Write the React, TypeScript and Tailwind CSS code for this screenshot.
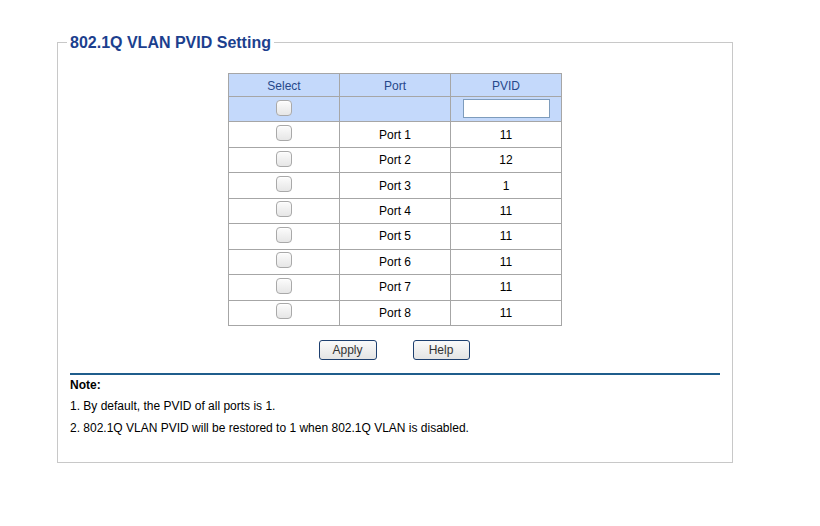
import React from "react";

const rows = [
  ["Port 1", "11"],
  ["Port 2", "12"],
  ["Port 3", "1"],
  ["Port 4", "11"],
  ["Port 5", "11"],
  ["Port 6", "11"],
  ["Port 7", "11"],
  ["Port 8", "11"],
];

function Check() {
  return (
    <span className="inline-block align-middle w-[16px] h-[16px] rounded-[4px] border border-[#a9a9a9] bg-gradient-to-b from-[#fcfcfc] to-[#e6e6e6] shadow-[inset_0_1px_1px_rgba(255,255,255,0.8)]" />
  );
}

export default function App() {
  const td = "border border-[#a6a6a6] text-center p-0 h-[25.45px] w-[111px]";
  return (
    <div className="w-[820px] h-[526px] pt-[33px] box-border bg-white font-['Liberation_Sans',Arial,sans-serif] text-[12px] text-black">
      <fieldset className="ml-[57px] w-[676px] h-[430px] border border-[#c8c8c8] px-[12px] box-border">
        <legend className="ml-[-3px] px-[3px] text-[16px] leading-[19px] font-bold text-[#1c3f8e]">
          802.1Q VLAN PVID Setting
        </legend>
        <div className="flex flex-col items-center mt-[21px]">
          <table className="border-collapse">
            <thead>
              <tr className="bg-[#c4d9fb] text-[#26488a]">
                <th className="border border-[#a6a6a6] font-normal h-[23px] w-[111px] p-0 pt-[1px]">Select</th>
                <th className="border border-[#a6a6a6] font-normal h-[23px] w-[111px] p-0 pt-[1px]">Port</th>
                <th className="border border-[#a6a6a6] font-normal h-[23px] w-[111px] p-0 pt-[1px]">PVID</th>
              </tr>
            </thead>
            <tbody>
              <tr className="bg-[#c4d9fb]">
                <td className={td}>
                  <div className="flex justify-center -mt-[3px]"><Check /></div>
                </td>
                <td className={td}></td>
                <td className={td}>
                  <div className="flex justify-center -mt-[2px]">
                    <div className="w-[87px] h-[19px] bg-white border border-[#7e9cbc]" />
                  </div>
                </td>
              </tr>
              {rows.map(([p, v]) => (
                <tr key={p}>
                  <td className={td}>
                    <div className="flex justify-center -mt-[3px]"><Check /></div>
                  </td>
                  <td className={td}>{p}</td>
                  <td className={td}>{v}</td>
                </tr>
              ))}
            </tbody>
          </table>
          <div className="flex gap-[36px] mt-[14px] -ml-[2px]">
            <button className="w-[58px] h-[20px] rounded-[3px] border border-[#1d3f6f] bg-gradient-to-b from-[#fafafa] to-[#e4e4e4] text-[12px] text-[#333333] leading-[18px]">
              Apply
            </button>
            <button className="w-[57px] h-[20px] rounded-[3px] border border-[#1d3f6f] bg-gradient-to-b from-[#fafafa] to-[#e4e4e4] text-[12px] text-[#333333] leading-[18px]">
              Help
            </button>
          </div>
        </div>
        <div className="mt-[13px] h-[2px] bg-[#1f5d8c] w-[650px]" />
        <div className="mt-[3px] leading-[15px] font-bold">Note:</div>
        <div className="mt-[6px] leading-[15px]">1. By default, the PVID of all ports is 1.</div>
        <div className="mt-[7px] leading-[15px]">2. 802.1Q VLAN PVID will be restored to 1 when 802.1Q VLAN is disabled.</div>
      </fieldset>
    </div>
  );
}
